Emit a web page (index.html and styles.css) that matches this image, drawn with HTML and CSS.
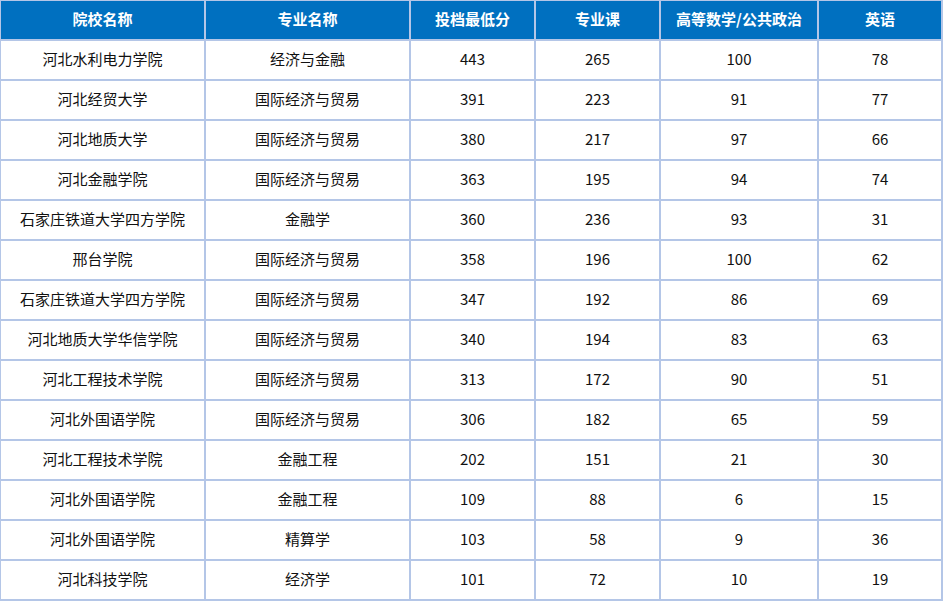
FILE: index.html
```html
<!DOCTYPE html>
<html lang="zh">
<head>
<meta charset="utf-8">
<link rel="stylesheet" href="styles.css">
</head>
<body>
<div class="grid">
  <div class="cell head">院校名称</div><div class="cell head">专业名称</div><div class="cell head">投档最低分</div><div class="cell head">专业课</div><div class="cell head">高等数学/公共政治</div><div class="cell head">英语</div>
  <div class="cell">河北水利电力学院</div><div class="cell">经济与金融</div><div class="cell">443</div><div class="cell">265</div><div class="cell">100</div><div class="cell">78</div>
  <div class="cell">河北经贸大学</div><div class="cell">国际经济与贸易</div><div class="cell">391</div><div class="cell">223</div><div class="cell">91</div><div class="cell">77</div>
  <div class="cell">河北地质大学</div><div class="cell">国际经济与贸易</div><div class="cell">380</div><div class="cell">217</div><div class="cell">97</div><div class="cell">66</div>
  <div class="cell">河北金融学院</div><div class="cell">国际经济与贸易</div><div class="cell">363</div><div class="cell">195</div><div class="cell">94</div><div class="cell">74</div>
  <div class="cell">石家庄铁道大学四方学院</div><div class="cell">金融学</div><div class="cell">360</div><div class="cell">236</div><div class="cell">93</div><div class="cell">31</div>
  <div class="cell">邢台学院</div><div class="cell">国际经济与贸易</div><div class="cell">358</div><div class="cell">196</div><div class="cell">100</div><div class="cell">62</div>
  <div class="cell">石家庄铁道大学四方学院</div><div class="cell">国际经济与贸易</div><div class="cell">347</div><div class="cell">192</div><div class="cell">86</div><div class="cell">69</div>
  <div class="cell">河北地质大学华信学院</div><div class="cell">国际经济与贸易</div><div class="cell">340</div><div class="cell">194</div><div class="cell">83</div><div class="cell">63</div>
  <div class="cell">河北工程技术学院</div><div class="cell">国际经济与贸易</div><div class="cell">313</div><div class="cell">172</div><div class="cell">90</div><div class="cell">51</div>
  <div class="cell">河北外国语学院</div><div class="cell">国际经济与贸易</div><div class="cell">306</div><div class="cell">182</div><div class="cell">65</div><div class="cell">59</div>
  <div class="cell">河北工程技术学院</div><div class="cell">金融工程</div><div class="cell">202</div><div class="cell">151</div><div class="cell">21</div><div class="cell">30</div>
  <div class="cell">河北外国语学院</div><div class="cell">金融工程</div><div class="cell">109</div><div class="cell">88</div><div class="cell">6</div><div class="cell">15</div>
  <div class="cell">河北外国语学院</div><div class="cell">精算学</div><div class="cell">103</div><div class="cell">58</div><div class="cell">9</div><div class="cell">36</div>
  <div class="cell">河北科技学院</div><div class="cell">经济学</div><div class="cell">101</div><div class="cell">72</div><div class="cell">10</div><div class="cell">19</div>
</div>
</body>
</html>
```
FILE: styles.css
```css
html, body {
  margin: 0;
  padding: 0;
  background: #ffffff;
}
.grid {
  width: 943px;
  height: 601px;
  box-sizing: border-box;
  padding: 1px 2px 2px 1px;
  background: #b4c6e7;
  display: grid;
  grid-template-columns: 203px 203px 123px 123px 156px 122px;
  grid-auto-rows: 38px;
  gap: 2px;
  font-family: "Noto Sans CJK SC", "Noto Sans", sans-serif;
  font-size: 15px;
  color: #111111;
}
.cell {
  background: #ffffff;
  display: flex;
  align-items: center;
  justify-content: center;
  white-space: nowrap;
  line-height: 20px;
  padding-bottom: 2px;
  box-sizing: border-box;
}
.cell.head {
  background: #0070c0;
  color: #ffffff;
  font-weight: bold;
}
```
